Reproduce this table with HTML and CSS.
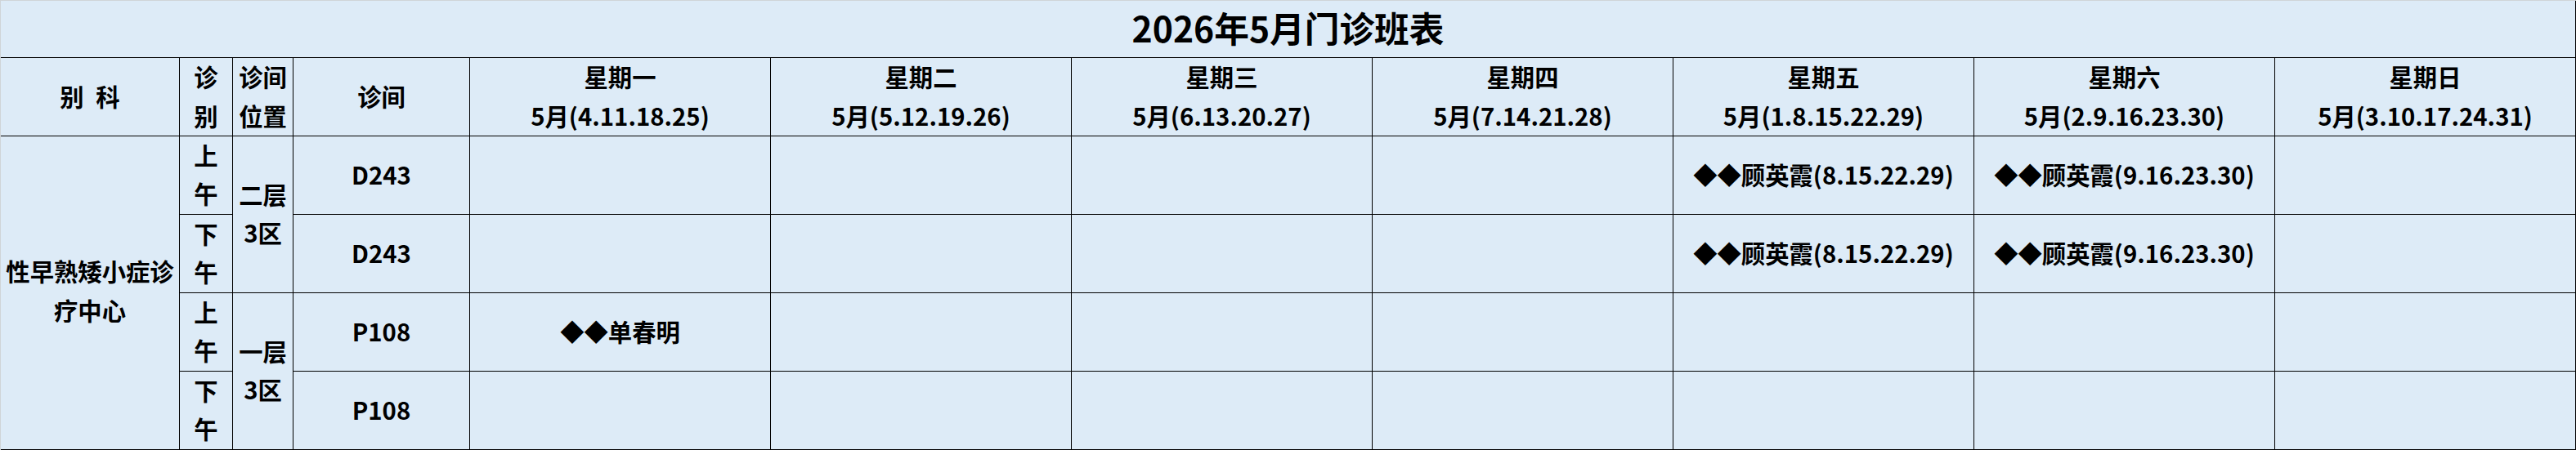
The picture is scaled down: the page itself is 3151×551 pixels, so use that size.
FILE: index.html
```html
<!DOCTYPE html>
<html lang="zh-CN">
<head>
<meta charset="utf-8">
<title>2026年5月门诊班表</title>
<link rel="stylesheet" href="styles.css">
</head>
<body>
<div class="sheet">
  <div class="cell title">2026年5月门诊班表</div>

  <div class="cell head">别&ensp;科</div>
  <div class="cell head">诊<br>别</div>
  <div class="cell head">诊间<br>位置</div>
  <div class="cell head">诊间</div>
  <div class="cell head">星期一<br>5月(4.11.18.25)</div>
  <div class="cell head">星期二<br>5月(5.12.19.26)</div>
  <div class="cell head">星期三<br>5月(6.13.20.27)</div>
  <div class="cell head">星期四<br>5月(7.14.21.28)</div>
  <div class="cell head">星期五<br>5月(1.8.15.22.29)</div>
  <div class="cell head">星期六<br>5月(2.9.16.23.30)</div>
  <div class="cell head last">星期日<br>5月(3.10.17.24.31)</div>

  <!-- row 1 -->
  <div class="cell dept">性早熟矮小症诊疗中心</div>
  <div class="cell">上<br>午</div>
  <div class="cell span2">二层<br>3区</div>
  <div class="cell">D243</div>
  <div class="cell"></div>
  <div class="cell"></div>
  <div class="cell"></div>
  <div class="cell"></div>
  <div class="cell">◆◆顾英霞(8.15.22.29)</div>
  <div class="cell">◆◆顾英霞(9.16.23.30)</div>
  <div class="cell last"></div>

  <!-- row 2 -->
  <div class="cell">下<br>午</div>
  <div class="cell">D243</div>
  <div class="cell"></div>
  <div class="cell"></div>
  <div class="cell"></div>
  <div class="cell"></div>
  <div class="cell">◆◆顾英霞(8.15.22.29)</div>
  <div class="cell">◆◆顾英霞(9.16.23.30)</div>
  <div class="cell last"></div>

  <!-- row 3 -->
  <div class="cell">上<br>午</div>
  <div class="cell span2">一层<br>3区</div>
  <div class="cell">P108</div>
  <div class="cell">◆◆单春明</div>
  <div class="cell"></div>
  <div class="cell"></div>
  <div class="cell"></div>
  <div class="cell"></div>
  <div class="cell"></div>
  <div class="cell last"></div>

  <!-- row 4 -->
  <div class="cell">下<br>午</div>
  <div class="cell">P108</div>
  <div class="cell"></div>
  <div class="cell"></div>
  <div class="cell"></div>
  <div class="cell"></div>
  <div class="cell"></div>
  <div class="cell"></div>
  <div class="cell last"></div>
</div>
</body>
</html>
```

FILE: styles.css
```css
html, body {
  margin: 0;
  padding: 0;
  background: #ddebf7;
}

.sheet {
  display: grid;
  grid-template-columns: 219px 65px 74px 216px repeat(7, 368px);
  grid-template-rows: 70px repeat(5, 96px);
  width: 3151px;
  box-sizing: border-box;
  border-top: 1px solid #d0d4d8;
  border-left: 1px solid #d0d4d8;
  background: #ddebf7;
  font-family: "Noto Sans CJK SC", "Noto Sans", sans-serif;
  font-weight: 700;
  font-size: 29.33px;
  line-height: 47px;
  color: #000;
}

.cell {
  box-sizing: border-box;
  border-right: 1px solid #000;
  border-bottom: 1px solid #000;
  padding-bottom: 3px;
  display: flex;
  align-items: center;
  justify-content: center;
  text-align: center;
  white-space: nowrap;
  overflow: hidden;
}

.title {
  grid-column: 1 / -1;
  font-size: 42.67px;
  line-height: 1;
}

.head {
  line-height: 48px;
}

.dept {
  grid-row: 3 / span 4;
  white-space: normal;
  padding: 0 4px 8px;
  line-height: 48px;
}

.span2 {
  grid-row: span 2;
}
```
